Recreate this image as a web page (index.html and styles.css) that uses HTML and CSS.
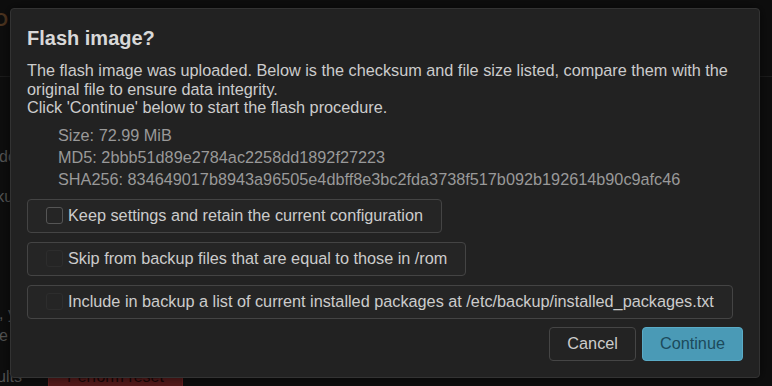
FILE: index.html
```html
<!DOCTYPE html>
<html lang="en">
<head>
    <meta charset="UTF-8">
    <meta name="viewport" content="width=device-width, initial-scale=1.0">
    <title>Flash image?</title>
    <link rel="stylesheet" href="styles.css">
</head>
<body>
    <div class="page">
        <div class="header"><span class="brand">O</span></div>
        <div class="content">
            <p class="desc first">download a tar archive of the current configuration files.</p>
            <div class="row row-backup">
                <span class="label">Download backup</span>
                <button class="btn-bg">Generate archive</button>
            </div>
            <p class="desc lines">, you can upload a previously generated backup archive here.<br>e firmware to its initial state, click "Perform reset".</p>
            <div class="row row-reset">
                <span class="label">Reset to defaults</span>
                <button class="btn-danger">Perform reset</button>
            </div>
        </div>
    </div>

    <div class="modal">
        <h4 class="modal-title">Flash image?</h4>
        <p class="modal-text">The flash image was uploaded. Below is the checksum and file size listed, compare them with the original file to ensure data integrity.<br>Click 'Continue' below to start the flash procedure.</p>
        <ul class="sums">
            <li>Size: 72.99 MiB</li>
            <li>MD5: 2bbb51d89e2784ac2258dd1892f27223</li>
            <li>SHA256: 834649017b8943a96505e4dbff8e3bc2fda3738f517b092b192614b90c9afc46</li>
        </ul>
        <div class="options">
            <label class="option"><span class="check"></span>Keep settings and retain the current configuration</label>
            <label class="option"><span class="check faint"></span>Skip from backup files that are equal to those in /rom</label>
            <label class="option"><span class="check faint"></span>Include in backup a list of current installed packages at /etc/backup/installed_packages.txt</label>
        </div>
        <div class="actions">
            <button class="btn">Cancel</button>
            <button class="btn primary">Continue</button>
        </div>
    </div>
</body>
</html>
```
FILE: styles.css
```css
body, html {
    margin: 0;
    padding: 0;
    height: 100%;
    overflow: hidden;
    background-color: #0e0e0e;
    font-family: "Liberation Sans", Arial, sans-serif;
    font-size: 16px;
}
.page {
    position: relative;
    height: 100%;
    color: #555;
}
.header {
    height: 76px;
    border-bottom: 1px solid #1c1c1c;
    overflow: hidden;
}
.brand {
    display: block;
    margin: 10px 0 0 -6px;
    font-size: 18px;
    font-weight: bold;
    color: #4e3520;
}
.content {
    margin-left: -1px;
}
.desc {
    margin: 0;
    white-space: nowrap;
    line-height: 18px;
}
.desc.first {
    margin-top: 71px;
}
.desc.lines {
    margin-top: 89px;
    line-height: 22px;
}
.row {
    display: flex;
    align-items: center;
    gap: 26px;
    height: 34px;
}
.row-backup {
    margin-top: 14px;
}
.row-reset {
    margin-top: 13px;
}
.label {
    display: flex;
    justify-content: flex-end;
    width: 200px;
    margin-left: -177px;
    white-space: nowrap;
}
.btn-bg, .btn-danger {
    height: 34px;
    padding: 0 18px;
    border-radius: 4px;
    font-family: inherit;
    font-size: 16px;
}
.btn-bg {
    background-color: #1a1a1a;
    border: 1px solid #2a2a2a;
    color: #555;
}
.btn-danger {
    width: 135px;
    background-color: #561b1b;
    border: 1px solid #652121;
    color: #160606;
}

.modal {
    position: absolute;
    top: 8px;
    left: 10px;
    width: 750px;
    box-sizing: border-box;
    padding: 16px;
    background-color: #222;
    border: 1px solid #333;
    border-radius: 4px;
    color: #ccc;
    font-size: 16.25px;
    box-shadow: 0 0 12px rgba(0, 0, 0, 0.6);
}
.modal-title {
    margin: 0;
    font-size: 20px;
    line-height: 26px;
    font-weight: bold;
    color: #d8d8d8;
}
.modal-text {
    margin: 10px 0 0;
    line-height: 18.5px;
}
.sums {
    list-style: none;
    margin: 7px 0 0;
    padding-left: 31px;
    line-height: 22.4px;
    color: #999;
}
.options {
    display: flex;
    flex-direction: column;
    align-items: flex-start;
    gap: 9px;
    margin-top: 8px;
}
.option {
    display: flex;
    align-items: center;
    gap: 5px;
    height: 34px;
    box-sizing: border-box;
    padding: 0 18px;
    background-color: #252525;
    border: 1px solid #444;
    border-radius: 4px;
    color: #ccc;
}
.check {
    width: 17px;
    height: 17px;
    box-sizing: border-box;
    border: 1px solid #555;
    border-radius: 3px;
}
.check.faint {
    border-color: #2d2d2d;
}
.actions {
    display: flex;
    justify-content: flex-end;
    gap: 6px;
    margin-top: 8px;
}
.btn {
    height: 34px;
    padding: 0 17px;
    border-radius: 4px;
    border: 1px solid #454545;
    background-color: #232323;
    color: #ccc;
    font-family: inherit;
    font-size: 16.25px;
    cursor: pointer;
}
.btn.primary {
    background-color: #4a9ab6;
    border-color: #5aabc6;
    color: #1c4a5c;
}
```
